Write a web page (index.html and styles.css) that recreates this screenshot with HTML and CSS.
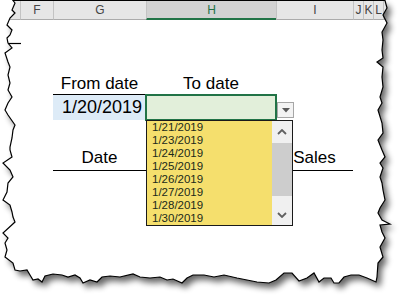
FILE: index.html
```html
<!DOCTYPE html>
<html lang="en">
<head>
    <meta charset="UTF-8">
    <meta name="viewport" content="width=device-width, initial-scale=1.0">
    <title>Date drop-down</title>
    <link rel="stylesheet" href="styles.css">
</head>
<body>

    <div class="sheet">
        <div class="col-heads">
            <div class="ch"></div>
            <div class="ch">F</div>
            <div class="ch">G</div>
            <div class="ch sel">H</div>
            <div class="ch">I</div>
            <div class="ch">J</div>
            <div class="ch">K</div>
            <div class="ch">L</div>
            <div class="ch"></div>
        </div>

        <div class="grid">
            <div class="cell lbl c-g r-3">From date</div>
            <div class="cell lbl c-h r-3">To date</div>

            <div class="cell from-val c-g r-4">1/20/2019</div>
            <div class="cell active c-h r-4">
                <div class="dd-btn">
                    <svg width="8" height="5" viewBox="0 0 8 5"><polygon points="0,0 8,0 4,4.5" fill="#595959"/></svg>
                </div>

                <div class="dd-list">
                    <ul class="items">
                        <li>1/21/2019</li>
                        <li>1/23/2019</li>
                        <li>1/24/2019</li>
                        <li>1/25/2019</li>
                        <li>1/26/2019</li>
                        <li>1/27/2019</li>
                        <li>1/28/2019</li>
                        <li>1/30/2019</li>
                    </ul>
                    <div class="scroll">
                        <div class="arrow">
                            <svg width="10" height="6" viewBox="0 0 10 6"><polyline points="1,5 5,1 9,5" fill="none" stroke="#606060" stroke-width="1.8"/></svg>
                        </div>
                        <div class="thumb"></div>
                        <div class="track"></div>
                        <div class="arrow">
                            <svg width="10" height="6" viewBox="0 0 10 6"><polyline points="1,1 5,5 9,1" fill="none" stroke="#606060" stroke-width="1.8"/></svg>
                        </div>
                    </div>
                </div>
            </div>

            <div class="cell lbl c-g r-6 low">Date</div>
            <div class="cell lbl c-h r-6 low"></div>
            <div class="cell lbl c-i r-6 low">Sales</div>
        </div>

        <!-- torn paper edge drawn over the sheet -->
        <svg class="torn" width="408" height="303" viewBox="0 0 408 303">
            <defs>
                <clipPath id="outside">
                    <path clip-rule="evenodd" d="M-5,-5 H413 V308 H-5 Z M13,0.5 L385,0.5 L387,8 L383,15 L387,23 L382,32 L383,40 L382,50 L383,58 L377,62 L383,67 L382,77 L383,87 L380,97 L382,103 L378,110 L382,123 L383,133 L378,140 L382,150 L385,157 L380,163 L383,168 L380,177 L382,183 L383,190 L385,200 L380,208 L378,213 L382,220 L390,224 L380,225 L382,232 L385,238 L380,247 L383,257 L378,263 L377,277 L376,282 L367,278 L359,275 L351,275 L344,277 L339,283 L334,283 L331,278 L324,278 L319,282 L314,273 L307,278 L299,281 L292,273 L284,273 L276,280 L269,283 L257,282 L247,280 L237,278 L224,275 L214,277 L204,275 L193,275 L187,278 L182,283 L173,279 L167,280 L160,277 L150,278 L140,277 L133,274 L120,277 L110,276 L102,277 L97,282 L90,280 L83,283 L80,278 L75,275 L68,277 L62,275 L53,274 L45,276 L42,282 L38,279 L33,280 L30,275 L27,270 L20,271 L15,270 L13,263 L5,257 L7,250 L5,243 L8,238 L3,233 L15,222 L13,217 L12,212 L10,205 L3,200 L7,192 L8,183 L13,177 L10,170 L3,163 L12,157 L10,150 L10,147 L12,138 L13,130 L15,125 L8,115 L5,110 L8,103 L12,97 L8,90 L10,83 L8,75 L10,67 L8,62 L5,53 L12,48 L8,43 L7,38 L10,35 L12,30 L7,25 L10,18 L15,13 L12,10 L15,3 Z"/>
                </clipPath>
                <filter id="soft" x="-10%" y="-10%" width="120%" height="120%">
                    <feGaussianBlur stdDeviation="3"/>
                </filter>
            </defs>
            <path class="paper-out" fill-rule="evenodd" d="M-5,-5 H413 V308 H-5 Z M13,0.5 L385,0.5 L387,8 L383,15 L387,23 L382,32 L383,40 L382,50 L383,58 L377,62 L383,67 L382,77 L383,87 L380,97 L382,103 L378,110 L382,123 L383,133 L378,140 L382,150 L385,157 L380,163 L383,168 L380,177 L382,183 L383,190 L385,200 L380,208 L378,213 L382,220 L390,224 L380,225 L382,232 L385,238 L380,247 L383,257 L378,263 L377,277 L376,282 L367,278 L359,275 L351,275 L344,277 L339,283 L334,283 L331,278 L324,278 L319,282 L314,273 L307,278 L299,281 L292,273 L284,273 L276,280 L269,283 L257,282 L247,280 L237,278 L224,275 L214,277 L204,275 L193,275 L187,278 L182,283 L173,279 L167,280 L160,277 L150,278 L140,277 L133,274 L120,277 L110,276 L102,277 L97,282 L90,280 L83,283 L80,278 L75,275 L68,277 L62,275 L53,274 L45,276 L42,282 L38,279 L33,280 L30,275 L27,270 L20,271 L15,270 L13,263 L5,257 L7,250 L5,243 L8,238 L3,233 L15,222 L13,217 L12,212 L10,205 L3,200 L7,192 L8,183 L13,177 L10,170 L3,163 L12,157 L10,150 L10,147 L12,138 L13,130 L15,125 L8,115 L5,110 L8,103 L12,97 L8,90 L10,83 L8,75 L10,67 L8,62 L5,53 L12,48 L8,43 L7,38 L10,35 L12,30 L7,25 L10,18 L15,13 L12,10 L15,3 Z"/>
            <g clip-path="url(#outside)">
                <path class="shadow" filter="url(#soft)" transform="translate(4,5)" d="M13,0.5 L385,0.5 L387,8 L383,15 L387,23 L382,32 L383,40 L382,50 L383,58 L377,62 L383,67 L382,77 L383,87 L380,97 L382,103 L378,110 L382,123 L383,133 L378,140 L382,150 L385,157 L380,163 L383,168 L380,177 L382,183 L383,190 L385,200 L380,208 L378,213 L382,220 L390,224 L380,225 L382,232 L385,238 L380,247 L383,257 L378,263 L377,277 L376,282 L367,278 L359,275 L351,275 L344,277 L339,283 L334,283 L331,278 L324,278 L319,282 L314,273 L307,278 L299,281 L292,273 L284,273 L276,280 L269,283 L257,282 L247,280 L237,278 L224,275 L214,277 L204,275 L193,275 L187,278 L182,283 L173,279 L167,280 L160,277 L150,278 L140,277 L133,274 L120,277 L110,276 L102,277 L97,282 L90,280 L83,283 L80,278 L75,275 L68,277 L62,275 L53,274 L45,276 L42,282 L38,279 L33,280 L30,275 L27,270 L20,271 L15,270 L13,263 L5,257 L7,250 L5,243 L8,238 L3,233 L15,222 L13,217 L12,212 L10,205 L3,200 L7,192 L8,183 L13,177 L10,170 L3,163 L12,157 L10,150 L10,147 L12,138 L13,130 L15,125 L8,115 L5,110 L8,103 L12,97 L8,90 L10,83 L8,75 L10,67 L8,62 L5,53 L12,48 L8,43 L7,38 L10,35 L12,30 L7,25 L10,18 L15,13 L12,10 L15,3 Z"/>
            </g>
            <path class="edge" d="M13,0.5 L385,0.5 L387,8 L383,15 L387,23 L382,32 L383,40 L382,50 L383,58 L377,62 L383,67 L382,77 L383,87 L380,97 L382,103 L378,110 L382,123 L383,133 L378,140 L382,150 L385,157 L380,163 L383,168 L380,177 L382,183 L383,190 L385,200 L380,208 L378,213 L382,220 L390,224 L380,225 L382,232 L385,238 L380,247 L383,257 L378,263 L377,277 L376,282 L367,278 L359,275 L351,275 L344,277 L339,283 L334,283 L331,278 L324,278 L319,282 L314,273 L307,278 L299,281 L292,273 L284,273 L276,280 L269,283 L257,282 L247,280 L237,278 L224,275 L214,277 L204,275 L193,275 L187,278 L182,283 L173,279 L167,280 L160,277 L150,278 L140,277 L133,274 L120,277 L110,276 L102,277 L97,282 L90,280 L83,283 L80,278 L75,275 L68,277 L62,275 L53,274 L45,276 L42,282 L38,279 L33,280 L30,275 L27,270 L20,271 L15,270 L13,263 L5,257 L7,250 L5,243 L8,238 L3,233 L15,222 L13,217 L12,212 L10,205 L3,200 L7,192 L8,183 L13,177 L10,170 L3,163 L12,157 L10,150 L10,147 L12,138 L13,130 L15,125 L8,115 L5,110 L8,103 L12,97 L8,90 L10,83 L8,75 L10,67 L8,62 L5,53 L12,48 L8,43 L7,38 L10,35 L12,30 L7,25 L10,18 L15,13 L12,10 L15,3 Z"/>
            <line class="edge" x1="8" y1="43.5" x2="21" y2="43.5"/>
        </svg>
    </div>

</body>
</html>
```

FILE: styles.css
```css
body {
    margin: 0;
    background: #fff;
    font-family: "Liberation Sans", Arial, sans-serif;
}

.sheet {
    position: relative;
    width: 408px;
    height: 303px;
    overflow: hidden;
    background: #fff;
    color: #000;
}

/* column letters */
.col-heads {
    display: grid;
    grid-template-columns: 20px 33px 93px 130px 77px 10px 10px 10px 1fr;
    height: 20px;
}

.ch {
    box-sizing: border-box;
    height: 20px;
    padding-top: 2px;
    line-height: 17px;
    font-size: 12px;
    text-align: center;
    color: #444;
    background: #e6e6e6;
    border-bottom: 1px solid #ababab;
    border-left: 1px solid #c3c3c3;
}

.ch:first-child {
    border-left: none;
}

.ch.sel {
    background: #d2d2d2;
    color: #217346;
    border-bottom: 2px solid #217346;
}

/* cells */
.grid {
    display: grid;
    grid-template-columns: 20px 33px 93px 130px 77px 10px 10px 10px 1fr;
    grid-template-rows: 25px 25px 25px 25px 26px 25px;
}

.cell {
    box-sizing: border-box;
    display: flex;
    align-items: flex-end;
    font-size: 17px;
    line-height: 20px;
}

.c-g { grid-column: 3; }
.c-h { grid-column: 4; }
.c-i { grid-column: 5; }
.r-3 { grid-row: 3; }
.r-4 { grid-row: 4; }
.r-6 { grid-row: 6; }

.lbl {
    justify-content: center;
    border-bottom: 1px solid #000;
}

.lbl.low {
    padding-bottom: 2px;
}

.from-val {
    justify-content: flex-end;
    padding: 0 4px 3px 0;
    font-size: 18px;
    background: #ddebf7;
}

.active {
    position: relative;
    background: #e2efda;
    box-shadow: inset 0 0 0 1px #217346, 0 0 0 1px #217346;
}

.dd-btn {
    position: absolute;
    left: 131px;
    top: 7px;
    box-sizing: border-box;
    width: 17px;
    height: 16px;
    border: 1px solid #a6a6a6;
    background: #f3f3f3;
    display: flex;
    align-items: center;
    justify-content: center;
}

.dd-list {
    position: absolute;
    left: 0;
    top: 25px;
    z-index: 2;
    box-sizing: border-box;
    width: 147px;
    height: 106px;
    border: 1px solid #1a1a1a;
    display: flex;
    background: #f5df6d;
}

.items {
    flex: 1;
    margin: 0;
    padding: 0 0 0 5px;
    list-style: none;
    font-size: 11.5px;
    line-height: 13px;
    color: #1a2a1a;
}

.scroll {
    width: 20px;
    background: #f0f0f0;
    display: flex;
    flex-direction: column;
}

.arrow {
    height: 21px;
    display: flex;
    align-items: center;
    justify-content: center;
}

.thumb {
    height: 53px;
    margin-top: 1px;
    background: #cdcdcd;
}

.track {
    flex: 1;
}

.torn {
    position: absolute;
    left: 0;
    top: 0;
    z-index: 5;
}

.paper-out {
    fill: #fff;
}

.shadow {
    fill: #000;
    opacity: 0.6;
}

.edge {
    fill: none;
    stroke: #000;
    stroke-width: 1.2;
}
```
